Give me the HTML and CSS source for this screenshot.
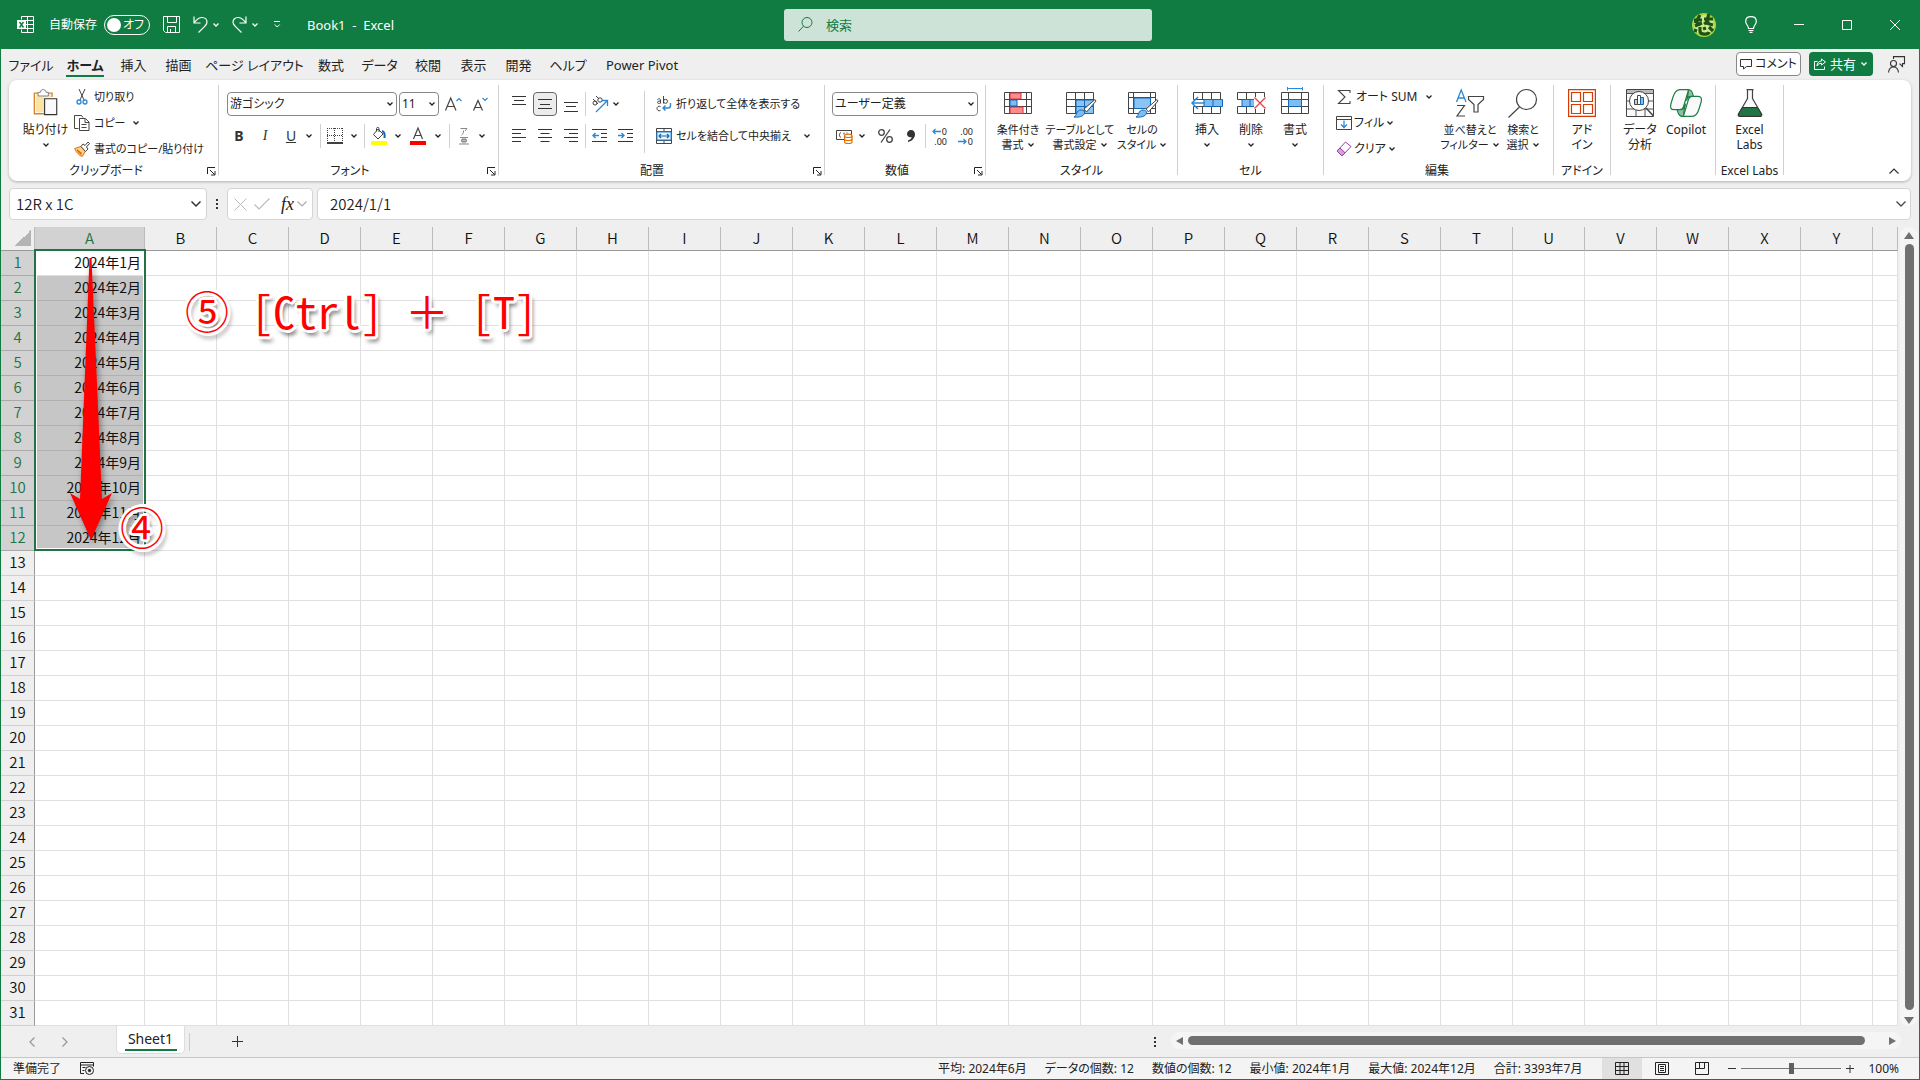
FILE: index.html
```html
<!DOCTYPE html>
<html lang="ja">
<head>
<meta charset="utf-8">
<title>Book1 - Excel</title>
<link rel="stylesheet" href="styles.css">
</head>
<body>
<svg class="defs" aria-hidden="true">
  <symbol id="chev" viewBox="0 0 8 8"><path d="M1.5 2.5 4 5l2.500-2.500" fill="none" stroke="currentColor" stroke-width="1.300"/></symbol>
  <symbol id="launch" viewBox="0 0 9 9"><path d="M.5 7V.5H8M3 3l4.500 4.500M8 4v4H4" fill="none" stroke="currentColor"/></symbol>
</svg>
<div class="app">
  <header class="titlebar">
    <div class="title-left">
      <svg class="logo" width="17" height="17" viewBox="0 0 17 17"><path d="M4.500 3.500v-3h12v16h-12v-3M10.500.5v16M9 4.500h7.500M9 8.500h7.500M9 12.500h7.500" fill="none" stroke="#fff"/><path d="M0 4h9v9H0z" fill="#fff"/><path d="m2.500 6 4 5.500M6.500 6l-4 5.500" stroke="#107c41" stroke-width="1.400"/></svg>
      <span class="autosave-label" id="as">自動保存</span>
      <button class="toggle" role="switch" aria-checked="false" aria-labelledby="as"><i class="knob"></i>オフ</button>
      <button class="tb save" aria-label="上書き保存"><svg width="17" height="17" viewBox="0 0 17 17" fill="none" stroke="#fff"><path d="M.5.5h16v16h-14l-2-2zM4.500.5v6h9v-6M4.500 16.500v-6h8v6M7.500 13v3.500"/></svg></button>
      <button class="tb undo" aria-label="元に戻す"><svg width="15" height="17" viewBox="0 0 15 17" fill="none" stroke="#fff" stroke-width="1.200"><path d="M1 .5v6.500h6.500M1.200 6.700C4 3 6 1.500 9 1.500c3.500 0 5 2.500 5 4.700 0 2-1 3-3 5L5.500 16.500"/></svg></button>
      <svg class="chev tchev"><use href="#chev"/></svg>
      <button class="tb redo" aria-label="やり直し"><svg width="15" height="17" viewBox="0 0 15 17" fill="none" stroke="#fff" stroke-width="1.200"><path d="M14 .5v6.500H7.500M13.800 6.700C11 3 9 1.500 6 1.500c-3.500 0-5 2.500-5 4.700 0 2 1 3 3 5l5.500 5.300"/></svg></button>
      <svg class="chev tchev"><use href="#chev"/></svg>
      <button class="tb customize" aria-label="クイック アクセス ツール バーのユーザー設定"><svg width="7" height="8" viewBox="0 0 7 8" fill="none" stroke="#fff"><path d="M0 .5h6M.7 3.500 3.200 6l2.500-2.500"/></svg></button>
      <span class="doc">Book1&nbsp; -&nbsp; Excel</span>
    </div>
    <label class="search"><svg width="15" height="15" viewBox="0 0 15 15" fill="none" stroke="#107c41"><circle cx="9" cy="5.500" r="5"/><path d="M5.500 9.200.5 14.500"/></svg><input type="text" placeholder="検索" aria-label="検索"></label>
    <div class="title-right">
      <svg class="avatar" width="24" height="24" viewBox="0 0 24 24"><circle cx="12" cy="12" r="12" fill="#a8d63c"/><circle cx="12" cy="12" r="10" fill="#cdeb8c"/><path d="M2 7h8M8 2 4 9l5 3M3 13l7-3M12 6h9M17 1l-3 9 7 2M12 11l5-3M4 16l-1 3M8 14v4c0 4 8 4 9 1M12 14l1 3M17 14l4 4" stroke="#1d5216" stroke-width="3.200" fill="none"/></svg>
      <button class="wb" aria-label="ヒント"><svg width="12" height="17" viewBox="0 0 12 17" fill="none" stroke="#fff" stroke-width="1.200"><path d="M3.500 12.500c0-3-2.800-4-2.800-7C.7 2.500 3 .7 6 .7s5.300 1.800 5.300 4.800c0 3-2.800 4-2.800 7zM3.500 14.500h5M4.500 16.300h3"/></svg></button>
      <button class="wb" aria-label="最小化"><svg width="10" height="10" viewBox="0 0 10 10"><path d="M0 4.500h10" stroke="#fff"/></svg></button>
      <button class="wb" aria-label="最大化"><svg width="10" height="10" viewBox="0 0 10 10"><path d="M.5.5h9v9h-9z" fill="none" stroke="#fff"/></svg></button>
      <button class="wb" aria-label="閉じる"><svg width="10" height="10" viewBox="0 0 10 10"><path d="m0 0 10 10M10 0 0 10" stroke="#fff"/></svg></button>
    </div>
  </header>

  <nav class="tabrow">
    <div class="tabs">
      <a href="#">ファイル</a><a href="#" class="on">ホーム</a><a href="#">挿入</a><a href="#">描画</a><a href="#">ページ レイアウト</a><a href="#">数式</a><a href="#">データ</a><a href="#">校閲</a><a href="#">表示</a><a href="#">開発</a><a href="#">ヘルプ</a><a href="#">Power Pivot</a>
    </div>
    <div class="tabactions">
      <button class="comment"><svg width="12" height="12" viewBox="0 0 12 12" fill="none" stroke="#333"><path d="M.5 1.500h11v7h-5l-3 2.500v-2.500h-3z"/></svg>コメント</button>
      <button class="share"><svg width="12" height="12" viewBox="0 0 12 12" fill="none" stroke="#fff"><path d="M3.500 3.500h-3v8h10v-3M7.500 1l4 3-4 3V5.300C5.500 5.300 4 6 3 8c0-3 2-5 4.500-5z"/></svg>共有<svg class="chev"><use href="#chev"/></svg></button>
      <button class="person" aria-label="フィードバック"><svg width="17" height="17" viewBox="0 0 17 17" fill="none" stroke="#333" stroke-width="1.100"><circle cx="5.500" cy="7.500" r="3"/><path d="M.5 16.500c.5-4 2.500-5.500 5-5.500s4.500 1.500 5 5.500M5.500 3V.6h11v7h-2v2.800l-3-2.800"/></svg></button>
    </div>
  </nav>

  <section class="ribbon" aria-label="ホーム">
    <div class="group g-clip">
      <div class="body">
        <button class="big"><svg class="bi" viewBox="0 0 28 30"><path d="M5.500 4.500h-4v22h11M16.500 4.500h4v4" fill="none" stroke="#d9822b" stroke-width="1.400"/><path d="M3 6h2v2h12V6h2v3h-7v16H3z" fill="#fbe3a6"/><path d="M5.500 7.500v-4h2.500C8 1.500 9.500.7 11 .7s3 .8 3 2.800h2.500v4z" fill="#fff" stroke="#777"/><path d="M12.500 10.500h13v17h-13z" fill="#fafafa" stroke="#333" stroke-width="1.200"/></svg><span>貼り付け</span><svg class="chev"><use href="#chev"/></svg></button>
        <div class="stack">
          <button class="sm"><svg width="16" height="16" viewBox="0 0 16 16" fill="none"><path d="m5 0 5 11M11 0 6 11" stroke="#444"/><circle cx="5" cy="13" r="2" stroke="#2b88d8" stroke-width="1.300"/><circle cx="11" cy="13" r="2" stroke="#2b88d8" stroke-width="1.300"/></svg>切り取り</button>
          <button class="sm copy"><svg width="16" height="16" viewBox="0 0 16 16" fill="none" stroke="#444"><path d="M4.500 13.500h-4V.5h7l1.500 2M5.500 3.500h6l3.500 3.500v8.500H5.500zM11 4v3.500h4M7.500 9.500h5M7.500 12.500h5"/></svg>コピー<svg class="chev"><use href="#chev"/></svg></button>
          <button class="sm"><svg width="16" height="16" viewBox="0 0 16 16"><path d="m.7 7.500 6-2 4.500 5-3 5c-3-1-6-4-7.500-8z" fill="#fbd48c" stroke="#e06c00"/><path d="m3 8 5 4-1 2-4-4z" fill="#e06c00"/><path d="M7 5.500 9 3l2 1.500L14 1l1.500 1.500L12.500 6 14 8l-2.500 2.500z" fill="#fff" stroke="#444"/></svg>書式のコピー/貼り付け</button>
        </div>
      </div>
      <footer><span>クリップボード</span><button class="launch" aria-label="クリップボードの詳細"><svg><use href="#launch"/></svg></button></footer>
    </div>
    <i class="div"></i>

    <div class="group g-font">
      <div class="body rows">
        <div class="row">
          <label class="combo fontname"><select aria-label="フォント"><option>游ゴシック</option></select><svg class="chev"><use href="#chev"/></svg></label>
          <label class="combo fontsize"><select aria-label="フォント サイズ"><option>11</option></select><svg class="chev"><use href="#chev"/></svg></label>
          <button class="ic grow" aria-label="拡大"><svg width="17" height="16" viewBox="0 0 17 16" fill="none"><path d="M.5 14.500 5.700 2 11 14.500M2.300 10.500h7" stroke="#444" stroke-width="1.200"/><path d="M11.500 5 14 2.500 16.500 5" stroke="#2b88d8" stroke-width="1.200"/></svg></button>
          <button class="ic shrink" aria-label="縮小"><svg width="15" height="16" viewBox="0 0 15 16" fill="none"><path d="M.5 14.500 5 4.500l4.500 10M2 11.500h6" stroke="#444" stroke-width="1.200"/><path d="M9.500 2 12 4.500 14.500 2" stroke="#2b88d8" stroke-width="1.200"/></svg></button>
        </div>
        <div class="row fmt">
          <button class="ic"><b>B</b></button>
          <button class="ic it">I</button>
          <button class="ic un">U</button><svg class="chev"><use href="#chev"/></svg>
          <i class="vd"></i>
          <button class="ic" aria-label="罫線"><svg width="16" height="16" viewBox="0 0 16 16" fill="none" stroke="#444"><path d="M0 .5h16M.5 0v14M15.500 0v14M7.500 0v14M0 7.500h16" stroke-dasharray="1 1"/><path d="M0 15h16" stroke="#000" stroke-width="1.500"/></svg></button><svg class="chev"><use href="#chev"/></svg>
          <i class="vd"></i>
          <button class="ic" aria-label="塗りつぶし"><svg width="16" height="18" viewBox="0 0 16 18" fill="none"><path d="m7 2 5 5-5 5-4.500-4.500zM5.500 4.500V1.500c0-1.500 2.500-1.500 2.500 0V5" stroke="#444"/><path d="M11 4c2 .5 3 3 2.500 7" stroke="#1267b4" stroke-width="2"/><path d="M0 14h16v4H0z" fill="#ff0"/></svg></button><svg class="chev"><use href="#chev"/></svg>
          <button class="ic" aria-label="フォントの色"><svg width="16" height="18" viewBox="0 0 16 18" fill="none"><path d="m3.500 12 4.500-11 4.500 11M5 8.500h6" stroke="#444" stroke-width="1.200"/><path d="M0 14h16v4H0z" fill="red"/></svg></button><svg class="chev"><use href="#chev"/></svg>
          <i class="vd"></i>
          <button class="ic" aria-label="ふりがな"><svg width="10" height="18" viewBox="0 0 10 18" fill="none" stroke="#888"><path d="M1.500 1.500h6.500L6 4M4.500 3.500C4.500 6 4 7 2.500 8M1 10.500h8M2.500 12.500h5v2h-5zM4 10.500v6M6 10.500v6M0 17h10"/></svg></button><svg class="chev"><use href="#chev"/></svg>
        </div>
      </div>
      <footer><span>フォント</span><button class="launch" aria-label="フォントの詳細"><svg><use href="#launch"/></svg></button></footer>
    </div>
    <i class="div"></i>

    <div class="group g-align">
      <div class="body">
        <div class="rows">
          <div class="row al">
            <button class="ic" aria-label="上揃え"><svg width="14" height="16" viewBox="0 0 14 16" stroke="#333"><path d="M0 .5h14M2 4.500h10M0 8.500h14"/></svg></button>
            <button class="ic pressed" aria-label="上下中央揃え"><svg width="14" height="16" viewBox="0 0 14 16" stroke="#333"><path d="M0 3.500h14M2 8.500h10M0 12.500h14"/></svg></button>
            <button class="ic" aria-label="下揃え"><svg width="14" height="16" viewBox="0 0 14 16" stroke="#333"><path d="M0 6.500h14M2 10.500h10M0 15.500h14"/></svg></button>
            <i class="vd"></i>
            <button class="ic" aria-label="方向"><svg width="17" height="17" viewBox="0 0 17 17" fill="none"><circle cx="4" cy="7" r="2" stroke="#444"/><path d="m2 3 5 5" stroke="#444"/><circle cx="9" cy="4" r="2.200" stroke="#444"/><path d="m5 0 3 3" stroke="#444"/><path d="M5 16 16 5M11 4.500h5.500V10" stroke="#2b88d8" stroke-width="1.300"/></svg></button><svg class="chev"><use href="#chev"/></svg>
          </div>
          <div class="row al">
            <button class="ic" aria-label="左揃え"><svg width="14" height="14" viewBox="0 0 14 14" stroke="#333"><path d="M0 .5h14M0 4.500h9M0 8.500h14M0 12.500h9"/></svg></button>
            <button class="ic" aria-label="中央揃え"><svg width="14" height="14" viewBox="0 0 14 14" stroke="#333"><path d="M0 .5h14M2.500 4.500h9M0 8.500h14M2.500 12.500h9"/></svg></button>
            <button class="ic" aria-label="右揃え"><svg width="14" height="14" viewBox="0 0 14 14" stroke="#333"><path d="M0 .5h14M5 4.500h9M0 8.500h14M5 12.500h9"/></svg></button>
            <i class="vd"></i>
            <button class="ic" aria-label="インデントを減らす"><svg width="15" height="14" viewBox="0 0 15 14" fill="none"><path d="M0 .5h15M9 4.500h6M9 8.500h6M0 12.500h15" stroke="#333"/><path d="M7 6.500H1M3.500 4 1 6.500 3.500 9" stroke="#2b88d8" stroke-width="1.400"/></svg></button>
            <button class="ic" aria-label="インデントを増やす"><svg width="15" height="14" viewBox="0 0 15 14" fill="none"><path d="M0 .5h15M9 4.500h6M9 8.500h6M0 12.500h15" stroke="#333"/><path d="M0 6.500h6M3.500 4 6 6.500 3.500 9" stroke="#2b88d8" stroke-width="1.400"/></svg></button>
          </div>
        </div>
        <i class="vd tall"></i>
        <div class="rows wraps">
          <button class="sm"><svg width="16" height="16" viewBox="0 0 16 16" fill="none"><path d="M1.500 3.500C3 2 4.500 3 4.500 4v3.500M4.500 5C2 5 1.500 5.500 1.500 6.500S3.500 8 4.500 6.500M7.500 0v7.500" stroke="#444"/><circle cx="9.500" cy="5.300" r="2" stroke="#444"/><path d="M4.500 10.500C2.500 9.500 1 11 1 12.500s1.500 3 3.500 2" stroke="#444"/><path d="M14.500 7v2.500c0 1.500-1 2.500-2.500 2.500H7M9.500 9.500 7 12l2.500 2.500" stroke="#2b88d8" stroke-width="1.400"/></svg>折り返して全体を表示する</button>
          <button class="sm"><svg width="16" height="16" viewBox="0 0 16 16" fill="none"><path d="M.5.5h15v15H.5zM.5 3.500h15M.5 12.500h15M8 .5v3M8 12.500v3" stroke="#444"/><path d="M1 4h14v8H1z" fill="#e5f2fc" stroke="#2b88d8"/><path d="M3 8h10M5 6 3 8l2 2M11 6l2 2-2 2" stroke="#1267b4" stroke-width="1.200"/></svg>セルを結合して中央揃え<svg class="chev"><use href="#chev"/></svg></button>
        </div>
      </div>
      <footer><span>配置</span><button class="launch" aria-label="配置の詳細"><svg><use href="#launch"/></svg></button></footer>
    </div>
    <i class="div"></i>

    <div class="group g-num">
      <div class="body rows">
        <div class="row"><label class="combo numfmt"><select aria-label="表示形式"><option>ユーザー定義</option></select><svg class="chev"><use href="#chev"/></svg></label></div>
        <div class="row nums">
          <button class="ic" aria-label="通貨"><svg width="17" height="15" viewBox="0 0 17 15" fill="none"><path d="M.5 1.500h15v9H.5z" stroke="#444"/><path d="M5 3.500C3 4 3 8 5 8.500M8 3.500v2M11 3.500v1" stroke="#444"/><path d="M8.500 7c0-2.500 7.500-2.500 7.500 0v6c0 2-7.500 2-7.500 0z" fill="#fff" stroke="#e06c00" stroke-width="1.200"/><path d="M8.500 7c0 2 7.500 2 7.500 0M8.500 10c0 2 7.500 2 7.500 0" stroke="#e06c00" stroke-width="1.200"/></svg></button><svg class="chev"><use href="#chev"/></svg>
          <button class="ic" aria-label="パーセント"><svg width="15" height="14" viewBox="0 0 15 14" fill="none" stroke="#444" stroke-width="1.300"><circle cx="3.500" cy="3.500" r="2.800"/><circle cx="11.500" cy="10.500" r="2.800"/><path d="M12 .5 3 13.500"/></svg></button>
          <button class="ic" aria-label="桁区切り"><svg width="8" height="12" viewBox="0 0 8 12"><path d="M4 0c2.500 0 4 1.700 4 4.200C8 8 5 11 1 12v-1.500C3.500 9.500 4.500 8.500 4.700 7 2 8 0 6 0 4 0 1.700 1.700 0 4 0z" fill="#333"/></svg></button>
          <i class="vd"></i>
          <button class="ic dec" aria-label="小数点以下の表示桁数を増やす"><span><svg width="9" height="7" viewBox="0 0 9 7"><path d="M9 3.500H1M3.500 1 1 3.500 3.500 6" fill="none" stroke="#2b88d8" stroke-width="1.300"/></svg>0</span><span>.00</span></button>
          <button class="ic dec" aria-label="小数点以下の表示桁数を減らす"><span>.00</span><span><svg width="9" height="7" viewBox="0 0 9 7"><path d="M0 3.500h8M5.500 1 8 3.500 5.500 6" fill="none" stroke="#2b88d8" stroke-width="1.300"/></svg>0</span></button>
        </div>
      </div>
      <footer><span>数値</span><button class="launch" aria-label="数値の詳細"><svg><use href="#launch"/></svg></button></footer>
    </div>
    <i class="div"></i>

    <div class="group g-style">
      <div class="body">
        <button class="big"><svg class="bi" viewBox="0 0 28 28" fill="none"><path d="M.5 3.500h27v21H.5zM.5 10.500h27M.5 17.500h27M22.500 3.500v21M5.500 3.500v21" stroke="#444"/><path d="M6 4h11v6H6zM6 18h13v6.500H6z" fill="#ff8c8c" stroke="#d13438"/><path d="M6 11h7v6H6z" fill="#7fbcf0" stroke="#1267b4"/></svg><span>条件付き</span><span>書式<svg class="chev"><use href="#chev"/></svg></span></button>
        <button class="big"><svg class="bi" viewBox="0 0 28 28" fill="none"><path d="M.5 3.500h27v21H.5zM.5 10.500h27M.5 17.500h27M9.500 3.500v21M18.500 3.500v21" stroke="#444"/><path d="M10 11h17.500v13.500H10z" fill="#8cc3f2" stroke="#1267b4"/><path d="M18.500 11v13M10 17.500h17" stroke="#1267b4"/><path d="M29 10.500 18 20l2.500 3L30 12z" fill="#fff" stroke="#444"/><path d="M8 28c3-1 2-7 7-7 4 0 5 4 1 6-2 1-5 1.500-8 1z" fill="#7fbcf0" stroke="#1267b4"/></svg><span>テーブルとして</span><span>書式設定<svg class="chev"><use href="#chev"/></svg></span></button>
        <button class="big"><svg class="bi" viewBox="0 0 28 28" fill="none"><path d="M.5 3.500h27v21H.5zM.5 8.500h27M.5 19.500h27M5.500 3.500v21M22.500 3.500v21" stroke="#444"/><path d="M6 9h16.500v10.500H6z" fill="#8cc3f2" stroke="#1267b4"/><path d="M29 10.500 18 20l2.500 3L30 12z" fill="#fff" stroke="#444"/><path d="M8 28c3-1 2-7 7-7 4 0 5 4 1 6-2 1-5 1.500-8 1z" fill="#7fbcf0" stroke="#1267b4"/></svg><span>セルの</span><span>スタイル<svg class="chev"><use href="#chev"/></svg></span></button>
      </div>
      <footer><span>スタイル</span></footer>
    </div>
    <i class="div"></i>

    <div class="group g-cell">
      <div class="body">
        <button class="big"><svg class="bi" viewBox="0 0 28 28" fill="none"><path d="M.5 3.500h27v7H.5zM.5 17.500h27v7H.5zM9.500 3.500v7M18.500 3.500v7M9.500 17.500v7M18.500 17.500v7" stroke="#444"/><path d="M11 10.500h18.500v7H11zM20 10.500v7" fill="#7fbcf0" stroke="#1267b4"/><path d="M12 14H-1M5 8l-6 6 6 6" stroke="#2b88d8" stroke-width="1.500"/></svg><span>挿入</span><svg class="chev"><use href="#chev"/></svg></button>
        <button class="big"><svg class="bi" viewBox="0 0 28 28" fill="none"><path d="M.5 3.500h27v7H.5zM.5 17.500h27v7H.5zM9.500 3.500v7M18.500 3.500v7M9.500 17.500v7M18.500 17.500v7" stroke="#444"/><path d="M5 10.500h15v7H5zM13 10.500v7" fill="#7fbcf0" stroke="#1267b4"/><path d="M17 8h12v12H17z" fill="#fff"/><path d="m17.500 8.500 11 11M28.500 8.500l-11 11" stroke="#e8474c" stroke-width="1.400"/></svg><span>削除</span><svg class="chev"><use href="#chev"/></svg></button>
        <button class="big"><svg class="bi" viewBox="0 0 28 28" fill="none"><path d="M.5 3.500h27v21H.5zM.5 10.500h27M.5 17.500h27M7.500 3.500v21M20.500 3.500v21" stroke="#444"/><path d="M7.500 10.500h13v7h-13z" fill="#7fbcf0" stroke="#1267b4"/><path d="M6.500-.5h15M6.500-2v3.500M21.500-2v3.500" stroke="#2b88d8"/></svg><span>書式</span><svg class="chev"><use href="#chev"/></svg></button>
      </div>
      <footer><span>セル</span></footer>
    </div>
    <i class="div"></i>

    <div class="group g-edit">
      <div class="body">
        <div class="stack">
          <button class="sm sum"><svg width="16" height="16" viewBox="0 0 16 16" fill="none"><path d="M14 4V1.500H2.500L9 8l-6.500 6.500H14V12" stroke="#444" stroke-width="1.100"/></svg>オート SUM<svg class="chev"><use href="#chev"/></svg></button>
          <button class="sm"><svg width="16" height="16" viewBox="0 0 16 16" fill="none"><path d="M.5 1.500h15v13H.5zM.5 4.500h15" stroke="#444"/><path d="M8 5.500v7M5 9.500l3 3 3-3" stroke="#2b88d8" stroke-width="1.300"/></svg>フィル<svg class="chev"><use href="#chev"/></svg></button>
          <button class="sm"><svg width="16" height="16" viewBox="0 0 16 16" fill="#fff" stroke="#9b3fa5"><path d="M9.500 1 15 5.500 6 15 1 10z"/><path d="m4 7 5 4.700L6 15l-5-5z" fill="#d9a0df"/></svg>クリア<svg class="chev"><use href="#chev"/></svg></button>
        </div>
        <button class="big sort"><svg class="bi" viewBox="0 0 28 28" fill="none"><path d="m.5 13 4.700-12L10 13M2 9h6.500" stroke="#2b88d8" stroke-width="1.300"/><path d="M1 16.500h7.500L1 27h8" stroke="#444" stroke-width="1.200"/><path d="M12.500 7.500h15v3l-5.500 5V23h-4v-7.500l-5.500-5z" stroke="#444" stroke-width="1.200"/></svg><span>並べ替えと</span><span>フィルター<svg class="chev"><use href="#chev"/></svg></span></button>
        <button class="big find"><svg class="bi" viewBox="0 0 28 28" fill="none" stroke="#444" stroke-width="1.200"><circle cx="17.500" cy="10.500" r="10"/><path d="M10.500 18-.5 28.500"/></svg><span>検索と</span><span>選択<svg class="chev"><use href="#chev"/></svg></span></button>
      </div>
      <footer><span>編集</span></footer>
    </div>
    <i class="div"></i>

    <div class="group g-addin">
      <div class="body"><button class="big"><svg class="bi" viewBox="0 0 28 28" fill="none" stroke="#d83b01" stroke-width="1.200"><path d="M.6.6h26.800v26.800H.6zM3.500 3.500h9v9h-9zM15.500 3.500h9v9h-9zM3.500 15.500h9v9h-9zM15.500 15.500h9v9h-9z"/></svg><span>アド</span><span>イン</span></button></div>
      <footer><span>アドイン</span></footer>
    </div>
    <i class="div"></i>

    <div class="group g-data">
      <div class="body">
        <button class="big"><svg class="bi" viewBox="0 0 28 28"><path d="M.5.5h27v27H.5z" fill="#fafafa" stroke="#444"/><path d="M1 1h26v3H1z" fill="#bbb"/><path d="M.5 4.500h27M.5 12h27M.5 20h27M10 20v7M19 20v7" stroke="#555"/><circle cx="13" cy="12" r="9.500" fill="#fff" stroke="#444"/><path d="m20 19 7.500 8" stroke="#444" stroke-width="1.500"/><path d="M8.500 10.500h3v5h-3z" fill="#ccc" stroke="#444"/><path d="M11.500 6.500h3v9h-3z" fill="#fff" stroke="#444"/><path d="M14.500 8.500h3v7h-3z" fill="#7fbcf0" stroke="#1267b4"/></svg><span>データ</span><span>分析</span></button>
        <button class="big"><svg class="bi wide" viewBox="0 0 32 28" stroke="#1b7f46" stroke-width="1.200"><path d="M18 .6H10C6 .6 4.500 3 3 8L1 14.500c-1 3.500-.5 6.200 3 6.200h6c2 0 3-1 3.500-3L17 6c1-3.500 2.500-5.400 1-5.400z" fill="#fafafa"/><path d="M14 27.400h8c4 0 5.500-2.400 7-7.400l2-6.500c1-3.500.5-6.200-3-6.200h-6c-2 0-3 1-3.500 3L15 22c-1 3.500-2.500 5.400-4 5.400z" fill="#fafafa"/><path d="M17.500.6c4 0 4.500 1.500 6 6.700h-3c-2 0-3 1-3.500 3l-.5 1.500L18 5c.5-2.500.5-4.400-.5-4.400zM13.500 27.400c-4 0-5-1.500-6.500-6.700h4c2 0 2.500-1 3-3l1.500-3-1.500 7c-.5 2.500 0 5.700-.5 5.700z" fill="#8dc4a3"/></svg><span>Copilot</span></button>
      </div>
      <footer></footer>
    </div>
    <i class="div"></i>

    <div class="group g-labs">
      <div class="body"><button class="big"><svg class="bi" viewBox="0 0 28 28"><path d="M10.500.6h7M11.500.6v9L2.500 25c-.6 1.400 0 2.400 1.500 2.400h20c1.500 0 2.100-1 1.500-2.400l-9-15.400v-9" fill="#fafafa" stroke="#444" stroke-width="1.200"/><path d="M6.500 18.500h15l4 6.500c.6 1.400 0 2.400-1.500 2.400H4c-1.500 0-2.100-1-1.500-2.400z" fill="#217346" stroke="#333"/></svg><span>Excel</span><span>Labs</span></button></div>
      <footer><span>Excel Labs</span></footer>
    </div>
    <i class="div"></i>
    <button class="collapse" aria-label="リボンを折りたたむ"><svg width="10" height="6" viewBox="0 0 10 6"><path d="m.5 5.500 4.500-4.500 4.500 4.500" fill="none" stroke="#333" stroke-width="1.200"/></svg></button>
  </section>

  <section class="formulabar">
    <label class="namebox"><input type="text" value="12R x 1C" aria-label="名前ボックス"><svg width="10" height="6" viewBox="0 0 10 6"><path d="M.5.5 5 5 9.500.5" fill="none" stroke="#333" stroke-width="1.500"/></svg></label>
    <i class="dots"></i>
    <div class="fxbox">
      <button aria-label="キャンセル"><svg width="13" height="13" viewBox="0 0 13 13"><path d="m.5.5 12 12M12.500.5l-12 12" stroke="#bbb"/></svg></button>
      <button aria-label="入力"><svg width="16" height="12" viewBox="0 0 16 12"><path d="m.5 6.500 4.500 4.500L15.500.5" fill="none" stroke="#bbb" stroke-width="1.200"/></svg></button>
      <button class="fx">fx</button>
      <svg width="10" height="6" viewBox="0 0 10 6"><path d="M.5.5 5 5 9.500.5" fill="none" stroke="#aaa" stroke-width="1.200"/></svg>
    </div>
    <label class="formula"><input type="text" value="2024/1/1" aria-label="数式バー"><svg width="10" height="6" viewBox="0 0 10 6"><path d="M.5.5 5 5 9.500.5" fill="none" stroke="#444" stroke-width="1.300"/></svg></label>
  </section>

  <main class="sheet">
    <div class="gridwrap">
      <table class="grid" id="grid"></table>
      <div class="selection"></div>
      <svg class="arrow" width="56" height="300" viewBox="0 0 56 300"><path d="M26.500 8h2L39 249l10-6-21 47L7 243l10 6z" fill="red"/></svg>
      <div class="mark mark4">④</div>
      <div class="mark mark5">⑤ [Ctrl] <span class="full">＋</span> [T]</div>
    </div>
    <div class="vscroll"><i class="up"></i><i class="vthumb"></i><i class="down"></i></div>
  </main>

  <nav class="sheetbar">
    <button class="prev" aria-label="前のシート"><svg width="6" height="10" viewBox="0 0 6 10"><path d="M5.500.5 1 5l4.500 4.500" fill="none" stroke="#999" stroke-width="1.300"/></svg></button>
    <button class="next" aria-label="次のシート"><svg width="6" height="10" viewBox="0 0 6 10"><path d="M.5.5 5 5 .5 9.500" fill="none" stroke="#999" stroke-width="1.300"/></svg></button>
    <a href="#" class="sheettab">Sheet1</a>
    <i class="tabdiv"></i>
    <button class="add" aria-label="新しいシート"><svg width="11" height="11" viewBox="0 0 11 11"><path d="M5.500 0v11M0 5.500h11" stroke="#333"/></svg></button>
    <div class="hright"><i class="dots"></i><div class="hscroll"><i class="left"></i><i class="hthumb"></i><i class="right"></i></div></div>
  </nav>

  <footer class="status">
    <span>準備完了</span>
    <svg class="rec" width="14" height="13" viewBox="0 0 14 13" fill="none" stroke="#222"><path d="M4 11.500H.5V.5h13v4M.5 3h13M2.500 5.500h3M2.500 8.500h2"/><circle cx="9.500" cy="8.500" r="4"/><circle cx="9.500" cy="8.500" r="1.200" fill="#222"/></svg>
    <div class="stats"><span>平均: 2024年6月</span><span>データの個数: 12</span><span>数値の個数: 12</span><span>最小値: 2024年1月</span><span>最大値: 2024年12月</span><span>合計: 3393年7月</span></div>
    <div class="views">
      <button class="on" aria-label="標準"><svg width="14" height="13" viewBox="0 0 14 13" fill="none" stroke="#222"><path d="M.5.5h13v12H.5zM.5 4.500h13M.5 8.500h13M5 .5v12M9 .5v12"/></svg></button>
      <button aria-label="ページ レイアウト"><svg width="14" height="13" viewBox="0 0 14 13" fill="none" stroke="#222"><path d="M.5.5h13v12H.5zM3.500 2.500h7v8h-7zM5 4.500h4M5 6.500h4M5 8.500h4"/></svg></button>
      <button aria-label="改ページ プレビュー"><svg width="14" height="13" viewBox="0 0 14 13" fill="none" stroke="#222"><path d="M.5.5h13v12H.5zM4.500.5v6h5v-6M.5 6.500h4"/></svg></button>
    </div>
    <button class="zb" aria-label="縮小"><svg width="8" height="8" viewBox="0 0 8 8"><path d="M0 3.500h8" stroke="#333"/></svg></button>
    <input class="zoom" type="range" min="0" max="100" value="50" aria-label="ズーム">
    <button class="zb" aria-label="拡大"><svg width="8" height="8" viewBox="0 0 8 8"><path d="M0 3.500h8M4 0v8" stroke="#333"/></svg></button>
    <span class="pct">100%</span>
  </footer>
</div>
<script src="grid.js"></script>
</body>
</html>
```

FILE: styles.css
```css
* { box-sizing: border-box; }
body { margin: 0; background: #efefef; color: #222; font: 12px/16px "Noto Sans", "Noto Sans CJK JP", sans-serif; font-feature-settings: "palt"; }
button, input, select { font: inherit; font-feature-settings: inherit; color: inherit; background: none; border: 0; padding: 0; margin: 0; outline: 0; appearance: none; border-radius: 0; }
button { white-space: nowrap; }
a { color: inherit; text-decoration: none; }
svg { display: block; flex: none; overflow: visible; }
.defs { position: absolute; width: 0; height: 0; }
.chev { width: 8px; height: 8px; }
.app { min-height: 100vh; border: 1px solid #107c41; border-top: 0; display: flex; flex-direction: column; }

/* title bar */
.titlebar { height: 49px; background: #107c41; color: #fff; display: grid; grid-template-columns: minmax(0, 783fr) 368px minmax(0, 767fr); align-items: center; }
.title-left { display: flex; align-items: center; padding-left: 16px; white-space: nowrap; }
.autosave-label { margin-left: 15px; width: 50px; }
.toggle { width: 46px; height: 20px; margin-left: 5px; border: 1px solid #fff; border-radius: 10px; display: flex; align-items: center; justify-content: space-between; padding: 0 5px 0 2px; line-height: 18px; }
.knob { width: 14px; height: 14px; border-radius: 50%; background: #fff; }
.save { margin-left: 13px; }
.undo { margin-left: 13px; }
.tchev { margin-left: 4px; }
.redo { margin-left: 12px; }
.customize { margin-left: 15px; }
.doc { margin-left: 26px; font-size: 13px; }
.search { display: flex; align-items: center; height: 32px; background: #cee3d7; border-radius: 3px; padding: 0 14px; gap: 13px; }
.search input { flex: 1; min-width: 0; font-size: 13px; }
.search input::placeholder { color: #107c41; opacity: 1; }
.title-right { display: flex; align-items: center; justify-content: flex-end; }
.avatar { margin-right: 11px; }
.wb { width: 48px; height: 32px; display: flex; align-items: center; justify-content: center; }

/* ribbon tabs */
.tabrow { height: 31px; display: flex; justify-content: space-between; }
.tabs { display: grid; grid-template-columns: 56px 52px 45px 45px 107px 46px 51px 46px 45px 45px 54px 94px; padding-left: 2px; }
.tabs a { justify-self: center; white-space: nowrap; line-height: 18px; padding-top: 7px; height: 28px; font-size: 13px; }
.tabs .on { font-weight: 700; border-bottom: 2px solid #107c41; }
.tabactions { display: flex; align-items: center; padding-right: 14px; margin-top: 3px; height: 24px; }
.comment, .share { display: flex; align-items: center; justify-content: center; height: 24px; border-radius: 4px; }
.comment { width: 65px; border: 1px solid #888; background: #fff; gap: 3px; }
.share { width: 64px; margin-left: 8px; background: #107c41; color: #fff; gap: 4px; font-size: 13px; }
.person { margin-left: 15px; }

/* ribbon */
.ribbon { display: flex; height: 101px; margin: 0 8px; background: #fff; border-radius: 8px; padding-top: 5px; box-shadow: 0 1px 3px #0004; }
.div { width: 1px; height: 90px; background: #d0d0d0; }
.group { display: flex; flex-direction: column; height: 95px; }
.group .body { display: flex; height: 78px; }
.group footer { position: relative; display: flex; justify-content: center; height: 17px; white-space: nowrap; }
.launch { position: absolute; right: 2px; top: 4px; width: 9px; height: 9px; }
.launch svg { width: 9px; height: 9px; }
.g-clip { width: 209px; }
.g-font { width: 279px; }
.g-align { width: 325px; }
.g-num { width: 160px; }
.g-style { width: 191px; }
.g-cell { width: 145px; }
.g-edit { width: 229px; }
.g-addin { width: 56px; }
.g-data { width: 104px; }
.g-labs { width: 67px; }
.big { display: flex; flex-direction: column; align-items: center; padding-top: 4px; line-height: 15px; height: 78px; }
.bi { width: 28px; height: 28px; margin-bottom: 5px; }
.bi.wide { width: 32px; }
.big span { display: flex; align-items: center; gap: 3px; }
.big > .chev { margin-top: 4px; }
.g-clip .body { padding-left: 12px; }
.g-clip .big { width: 49px; }
.g-clip footer { padding-right: 15px; }
.stack { display: flex; flex-direction: column; height: 78px; }
.sm { display: flex; align-items: center; gap: 4px; height: 26px; padding-bottom: 3px; font-size: 11px; }
.stack .sm + .sm { padding-bottom: 2px; }
.g-clip .stack { margin-left: 4px; }
.copy .chev { margin-left: 2px; }
.body.rows, .rows { display: flex; flex-direction: column; gap: 8px; padding-top: 7px; }
.row { display: flex; height: 24px; }
.ic { display: flex; align-items: center; justify-content: center; height: 24px; }
.row > .chev { margin: 8px auto; }
.vd { width: 1px; height: 24px; background: #d0d0d0; justify-self: center; }
.vd.tall { height: 62px; margin-top: 6px; }
.combo { display: grid; grid-template-columns: 1fr 12px; height: 24px; border: 1px solid #888; border-radius: 4px; align-items: center; }
.combo select { grid-area: 1 / 1 / 2 / 3; padding-left: 2px; width: 100%; height: 22px; }
.combo .chev { grid-area: 1 / 2; justify-self: center; pointer-events: none; }
.g-font .body { padding-left: 8px; }
.fontname { width: 170px; margin-right: 2px; }
.fontsize { width: 40px; }
.grow { margin-left: 6px; }
.shrink { margin-left: 11px; }
.fmt { display: grid; grid-template-columns: 24px 28px 24px 12px 10px 20px 18px 2px 28px 10px 30px 10px 12px 18px 18px; }
.fmt .ic { font-size: 14px; color: #333; }
.it { font-family: "Liberation Serif", serif; font-style: italic; }
.un { text-decoration: underline; }
.g-font footer { padding-right: 17px; }
.g-align .body { padding-left: 8px; }
.al { display: grid; grid-template-columns: 24px 28px 24px 4px 24px 28px; width: 137px; }
.al > .chev { margin-left: 1px; }
.pressed { width: 24px; justify-self: center; border: 1px solid #666; background: #ececec; border-radius: 4px; }
.wraps { padding-left: 11px; }
.wraps .sm { height: 24px; padding: 0; }
.wraps .chev { margin-left: 8px; }
.g-align footer { padding-right: 19px; }
.g-num .body { padding-left: 7px; }
.numfmt { width: 146px; }
.nums { display: grid; grid-template-columns: 24px 12px 34px 18px 10px 20px 26px; }
.dec { flex-direction: column; font-size: 9px; line-height: 9px; align-items: flex-end; padding-right: 3px; gap: 1px; }
.dec span { display: flex; align-items: center; gap: 1px; height: 9px; }
.g-num footer { padding-right: 16px; }
.g-style .body { padding-left: 1px; }
.g-style .big { width: 62px; }
.g-style .big, .sort, .find { font-size: 11px; }
.g-cell .body { padding-left: 7px; }
.g-cell .big { width: 44px; }
.g-edit .body { padding-left: 12px; }
.g-edit .stack { width: 102px; }
.g-edit .sm { font-size: 12px; }
.g-edit .sm + .sm { gap: 2px; }
.g-edit footer { padding-right: 3px; }
.sum .chev { margin-left: 4px; }
.sort { width: 64px; }
.find { width: 42px; }
.g-addin .big { width: 56px; }
.g-data .body { padding-left: 6px; }
.g-data .big { width: 46px; }
.g-labs .big { width: 67px; }
.collapse { margin: 83px 12px auto auto; }

/* formula bar */
.formulabar { display: flex; align-items: center; height: 46px; padding: 0 8px; font-size: 15px; }
.formulabar > label, .fxbox { display: flex; align-items: center; height: 32px; background: #fff; border: 1px solid #d4d4d4; border-radius: 4px; }
.namebox { width: 198px; padding: 0 5px 0 6px; }
.formulabar input { flex: 1; min-width: 0; font-family: "Noto Sans CJK JP", sans-serif; font-weight: 350; color: #222; font-feature-settings: normal; }
.dots { width: 2px; height: 10px; background: repeating-linear-gradient(#333 0 2px, transparent 2px 4px); }
.formulabar .dots { margin: 0 9px; }
.fxbox { width: 86px; padding: 0 2px 0 6px; gap: 7px; }
.fx { font: italic 400 18px/20px "Liberation Serif", serif; margin-left: 4px; }
.fxbox > svg { margin-left: -4px; }
.formula { flex: 1; margin-left: 4px; padding: 0 4px 0 12px; }

/* sheet */
.sheet { display: flex; }
.gridwrap { flex: 1; min-width: 0; position: relative; }
.grid { width: 100%; table-layout: fixed; border-collapse: separate; border-spacing: 0; font-family: "Noto Sans CJK JP", sans-serif; background: #fff; }
.grid th, .grid td { padding: 0 0 2px; height: 25px; border-right: 1px solid #e0e0e0; border-bottom: 1px solid #e0e0e0; overflow: hidden; white-space: nowrap; }
.c-head { width: 34px; }
.c-a { width: 110px; }
.c-n { width: 72px; }
.grid th { background: #efefef; font-weight: 350; font-size: 15px; line-height: 20px; color: #111; border-color: #bbb; }
.grid thead th { height: 24px; border-bottom-color: #999; }
.grid tbody th { border-right-color: #999; border-bottom-color: #d0d0d0; text-align: center; }
.grid .hl { background: #d2d2d2; color: #217346; border-bottom-color: #aaa; }
.grid td { text-align: right; padding-right: 3px; font-size: 14px; font-weight: 400; font-feature-settings: normal; line-height: 20px; color: #111; }
.grid .sel { background: #c6c6c6; border-bottom-color: #b0b0b0; }
.corner::after { content: ""; display: block; margin-left: 14px; width: 16px; height: 16px; background: linear-gradient(135deg, transparent 50%, #b4b4b4 50%); }
.selection { position: absolute; left: 33px; top: 22px; width: 112px; height: 302px; border: 2px solid #217346; box-shadow: inset 0 0 0 1px #fff; }
.arrow { position: absolute; left: 62px; top: 23px; filter: drop-shadow(2px 3px 3px #0006); }
.mark { position: absolute; color: #f00; font: 400 44px/48px "Noto Sans CJK JP", sans-serif; font-feature-settings: "hwid"; white-space: pre; text-shadow: 2px 0 #fff, -2px 0 #fff, 0 2px #fff, 0 -2px #fff, 2px 2px #fff, -2px 2px #fff, 2px -2px #fff, -2px -2px #fff, 3px 1px #fff, -3px 1px #fff, 1px 3px #fff, 1px -3px #fff, 3px 5px 4px #000a; }
.mark4 { left: 119px; top: 275px; }
.mark5 { left: 184px; top: 59px; }
.full { font-feature-settings: normal; }
.vscroll { width: 18px; margin: 0 1px 0 2px; border-radius: 9px; background: #f5f5f5; display: flex; flex-direction: column; align-items: center; padding: 5px 0 2px; }
.up, .down { border: 5px solid transparent; border-top: 0; border-bottom: 7px solid #707070; }
.down { transform: rotate(180deg); }
.vthumb { flex: 1; width: 9px; border-radius: 5px; background: #707070; margin: 5px 0 7px; }

/* sheet tabs */
.sheetbar { display: flex; align-items: center; height: 32px; border-bottom: 1px solid #c6c6c6; }
.prev { margin-left: 28px; }
.next { margin-left: 27px; }
.sheettab { align-self: flex-start; margin-left: 48px; width: 69px; height: 28px; background: #fff linear-gradient(#107c41, #107c41) 50% 23px / 52px 2px no-repeat; border: 1px solid #ddd; border-top: 0; border-radius: 0 0 5px 5px; text-align: center; font-size: 14px; line-height: 26px; }
.tabdiv { width: 1px; height: 18px; background: #ccc; margin-left: 4px; }
.add { margin-left: 42px; }
.hright { flex: 1; display: flex; align-items: center; justify-content: flex-end; }
.hscroll { width: 730px; height: 17px; margin: 0 18px 2px 15px; border-radius: 9px; background: #f5f5f5; display: flex; align-items: center; padding: 0 5px; }
.left, .right { border: 4px solid transparent; border-left: 0; border-right: 7px solid #707070; }
.right { transform: rotate(180deg); }
.hthumb { flex: 1; height: 9px; border-radius: 5px; background: #707070; margin: 0 24px 0 5px; }

/* status bar */
.status { display: flex; align-items: center; height: 21px; background: #f4f4f4; white-space: nowrap; padding: 0 20px 0 12px; }
.rec { margin-left: 19px; }
.stats { margin-left: auto; display: flex; gap: 18px; }
.views { display: flex; margin-left: 20px; }
.views button { width: 40px; height: 21px; display: flex; align-items: center; justify-content: center; }
.views .on { background: #e0e0e0; }
.zb { flex: none; }
.views + .zb { margin-left: 6px; }
.zoom { width: 100px; height: 12px; margin: 0 5px; background: linear-gradient(#777, #777) 0 50% / 100% 1px no-repeat; }
.zoom::-webkit-slider-thumb { appearance: none; width: 5px; height: 11px; background: #606060; }
.pct { margin-left: 14px; }
```

FILE: grid.js
```js
const grid = document.getElementById('grid');
const letters = 'ABCDEFGHIJKLMNOPQRSTUVWXY'.split('');
const months = Array.from({ length: 12 }, (_, i) => `2024年${i + 1}月`);

let html = '<colgroup><col class="c-head"><col class="c-a">' +
  '<col class="c-n">'.repeat(24) + '<col></colgroup>';
html += '<thead><tr><th class="corner"></th>' +
  letters.map((l, i) => `<th scope="col"${i ? '' : ' class="hl"'}>${l}</th>`).join('') +
  '<th></th></tr></thead><tbody>';
for (let r = 1; r <= 31; r++) {
  const text = months[r - 1] || '';
  html += `<tr><th scope="row"${text ? ' class="hl"' : ''}>${r}</th>` +
    `<td${text && r > 1 ? ' class="sel"' : ''}>${text}</td>` +
    '<td></td>'.repeat(25) + '</tr>';
}
grid.innerHTML = html + '</tbody>';
```
